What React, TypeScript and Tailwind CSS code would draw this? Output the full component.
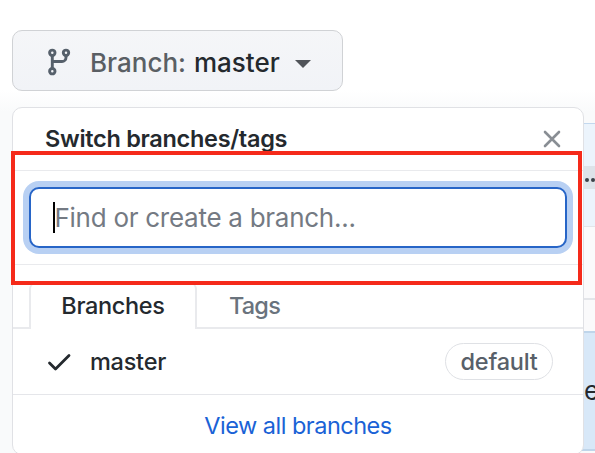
function BranchIcon() {
  return (
    <svg className="h-7 w-6 shrink-0" viewBox="0 0 24 28" fill="none" stroke="#56606b" strokeWidth="2.9">
      <circle cx="5.3" cy="4.8" r="2.7" />
      <circle cx="19" cy="4.8" r="2.7" />
      <circle cx="5.3" cy="23.2" r="2.7" />
      <path d="M5.3 7.5v12.9M19 7.5v2a4 4 0 0 1-4 4H5.3" />
    </svg>
  );
}

function FileList() {
  return (
    <div className="mt-8 ml-5 border-t border-[#c3d8ee]">
      <div className="flex h-[102px] items-start justify-end bg-[#ecf4fc] pt-[42px]">
        <span className="flex h-[23px] w-[11px] items-center gap-[2px] bg-[#dde3e9] pt-1 pl-px">
          <i className="size-1 shrink-0 rounded-full bg-[#3c4248]" />
          <i className="size-1 shrink-0 rounded-full bg-[#3c4248]" />
        </span>
      </div>
      <div className="h-[74px] border-t border-b-2 border-[#e3e5e9] bg-[#fafafb]" />
      <div className="h-[31px] bg-[#fafafb]" />
      <div className="flex h-[120px] items-center justify-end border-y-2 border-[#bfd5ea] bg-[#d8e8f8]">
        <span className="w-[11px] text-[26px] leading-8 text-[#24292e]">e</span>
      </div>
    </div>
  );
}

function BranchMenu() {
  return (
    <div className="absolute top-[107px] left-3 flex h-[348px] w-[572px] flex-col rounded-[10px] border-[1.5px] border-[#e0e1e5] bg-white pt-px">
      <div className="flex h-[62px] shrink-0 items-center justify-between border-b border-[#e9eaed] pr-[22px] pb-0.5 pl-8">
        <span className="text-[23.5px] leading-8 font-semibold tracking-[-0.3px] whitespace-nowrap text-[#24292e]">Switch branches/tags</span>
        <svg className="size-[18px]" viewBox="0 0 18 18" fill="none" stroke="#898e94" strokeWidth="2.6" strokeLinecap="round">
          <path d="M2 2l14 14M16 2L2 16" />
        </svg>
      </div>
      <div className="h-[94px] shrink-0 border-b border-[#e9eaed] px-4 pt-4">
        <div className="flex h-[61px] items-center rounded-[10px] border-2 border-[#2765c7] bg-white pl-[22px] ring-[6px] ring-[#b8d0f3]">
          <i className="h-[31px] w-[1.5px] shrink-0 bg-black" />
          <span className="text-[26px] leading-8 tracking-[-0.27px] whitespace-nowrap text-[#747a83]">Find or create a branch...</span>
        </div>
      </div>
      <div className="flex h-[64px] shrink-0 pt-[18px]">
        <div className="w-4 border-b-2 border-[#e9eaed]" />
        <div className="flex w-[168px] items-center justify-center rounded-t-md border-x-2 border-t border-[#e9eaed] pb-0.5 text-[23.5px] font-medium tracking-[-0.35px] text-[#24292e]">Branches</div>
        <div className="flex flex-1 items-center border-b-2 border-[#e9eaed] pt-0.5 pl-8 text-[23.5px] font-medium tracking-[-0.8px] text-[#6a737d]">Tags</div>
      </div>
      <div className="flex h-[66px] shrink-0 items-center border-b-[1.5px] border-[#e5e6ea] pr-[30px] pl-[34px]">
        <svg className="h-[18px] w-6" viewBox="0 0 24 18" fill="none" stroke="#24292e" strokeWidth="2.8" strokeLinecap="round" strokeLinejoin="round">
          <path d="M2.5 10l6 6L22 2.5" />
        </svg>
        <span className="ml-[19px] text-[23.5px] font-medium tracking-[-0.25px] text-[#24292e]">master</span>
        <span className="ml-auto flex h-[37px] w-[108px] items-center justify-center rounded-full border-[1.5px] border-[#dfe1e5] text-[23.5px] font-medium tracking-[-0.25px] text-[#586069]">default</span>
      </div>
      <div className="flex h-[62px] shrink-0 items-center justify-center text-[23.5px] tracking-[-0.5px] text-[#1a62d6]">View all branches</div>
    </div>
  );
}

export default function App() {
  return (
    <main className="relative h-[453px] w-[595px] overflow-hidden bg-[linear-gradient(to_bottom,#fff_90px,#f9fafb_112px)] pt-[30px] font-['Inter','Liberation_Sans',sans-serif]">
      <button className="ml-3 flex h-[61px] w-[331px] items-center rounded-[10px] border-[1.5px] border-[#d0d2d5] bg-linear-to-b from-[#f5f6f8] to-[#f1f3f7] pt-[3px] pl-[34px] text-[26px] font-medium">
        <BranchIcon />
        <span className="ml-[19px] text-[#5a5f64]">Branch:</span>
        <span className="ml-2 text-[#24292e]">master</span>
        <i className="mt-1 ml-[15px] border-x-8 border-t-8 border-x-transparent border-t-[#505459]" />
      </button>
      <FileList />
      <BranchMenu />
      <div className="absolute top-[151px] left-[11px] h-[134px] w-[571px] border-4 border-[#f52a1a]" />
    </main>
  );
}
